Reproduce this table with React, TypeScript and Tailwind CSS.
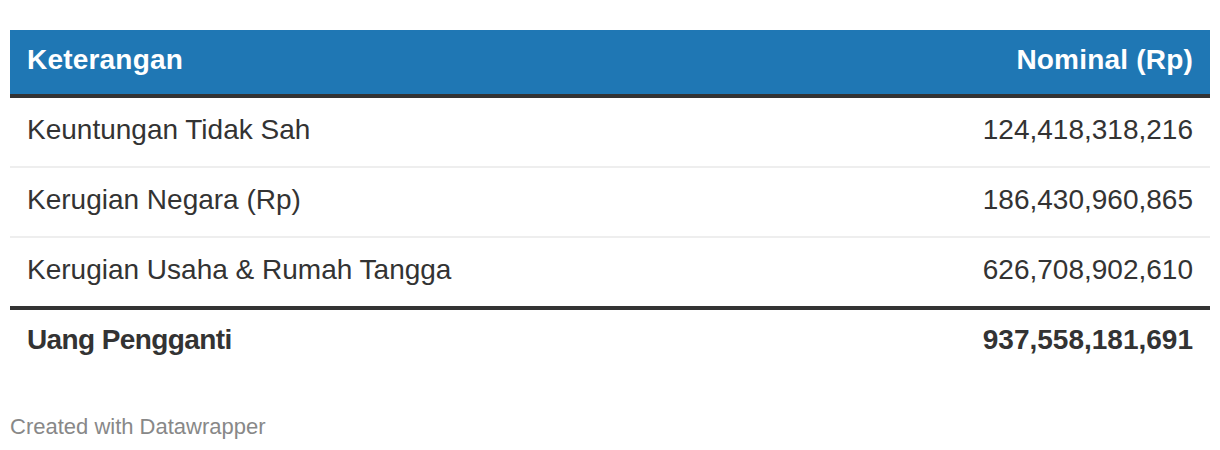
const rows = [
  { label: "Keuntungan Tidak Sah", value: "124,418,318,216" },
  { label: "Kerugian Negara (Rp)", value: "186,430,960,865" },
  { label: "Kerugian Usaha & Rumah Tangga", value: "626,708,902,610" },
];

export default function App() {
  return (
    <div className="min-h-[450px] bg-white px-[10px] pt-[30px] font-['Liberation_Sans',Arial,sans-serif] text-[#333]">
      <div className="w-full">
        <div className="flex h-[68px] items-center justify-between border-b-4 border-[#333] bg-[#1f77b4] px-[17px] pb-[4px] text-[28px] font-bold tracking-[0.2px] text-white">
          <span>Keterangan</span>
          <span>Nominal (Rp)</span>
        </div>
        {rows.map((r, i) => (
          <div
            key={r.label}
            className={
              i < rows.length - 1
                ? "flex h-[70px] items-center justify-between border-b-2 border-[#eee] px-[17px] pb-[5px] text-[28px]"
                : "flex h-[68px] items-center justify-between px-[17px] pb-[5px] text-[28px]"
            }
          >
            <span>{r.label}</span>
            <span>{r.value}</span>
          </div>
        ))}
        <div className="flex h-[64px] items-center justify-between border-t-4 border-[#333] px-[17px] text-[28px] font-bold">
          <span className="tracking-[-0.6px]">Uang Pengganti</span>
          <span>937,558,181,691</span>
        </div>
      </div>
      <div className="mt-[40px] text-[22px] text-[#888]">Created with Datawrapper</div>
    </div>
  );
}
